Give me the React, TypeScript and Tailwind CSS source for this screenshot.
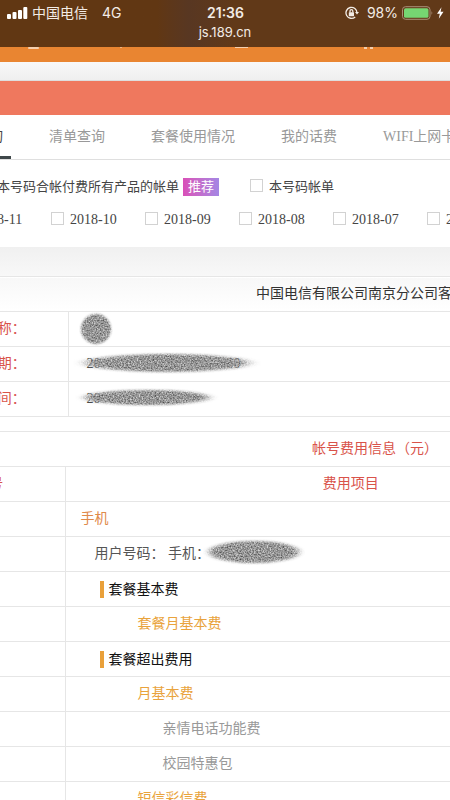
import React from "react";

const CJK = "font-['Liberation_Serif','Noto_Sans_CJK_SC',sans-serif]";

const tabs = ["帐单查询", "清单查询", "套餐使用情况", "我的话费", "WIFI上网卡"];
const months = ["2018-11", "2018-10", "2018-09", "2018-08", "2018-07", "2018-06", "2018-05"];

type BlobProps = { id: string; width: number; height: number; soft: number; className: string };

/* Grainy smudge that hides private values */
function Smudge({ id, width, height, soft, className }: BlobProps) {
  return (
    <svg className={"absolute " + className} width={width} height={height} aria-hidden="true">
      <defs>
        <filter id={id} x="0" y="0" width={width} height={height} filterUnits="userSpaceOnUse" colorInterpolationFilters="sRGB">
          <feGaussianBlur in="SourceGraphic" stdDeviation={`${soft} 1`} result="shape" />
          <feTurbulence type="fractalNoise" baseFrequency="0.7" numOctaves="2" seed="7" />
          <feColorMatrix values="0.8 0 0 0 0.19  0.8 0 0 0 0.19  0.8 0 0 0 0.19  0 0 0 0 1" />
          <feComposite in2="shape" operator="in" />
        </filter>
      </defs>
      <ellipse
        cx={width / 2}
        cy={height / 2}
        rx={width / 2 - soft * 2}
        ry={height / 2 - 2}
        fill="#000"
        filter={`url(#${id})`}
      />
    </svg>
  );
}

function StatusBar() {
  return (
    <header className="relative h-[47px] bg-linear-to-r from-[#613713] from-35% via-[#583722] via-42% to-[#613918] to-52% font-['Inter','Noto_Sans_CJK_SC',sans-serif] text-[#f3ece6]">
      <div className="grid grid-cols-[1fr_auto_1fr] items-center pt-1 pr-1.5 pl-[7px] text-[14px] leading-[18px]">
        <div className="flex items-center">
          <svg width="21" height="12" viewBox="0 0 21 12" fill="#fff" aria-hidden="true">
            <rect x="0" y="7" width="4" height="5" rx="1" />
            <rect x="5.5" y="5" width="4" height="7" rx="1" />
            <rect x="11" y="3" width="4" height="9" rx="1" />
            <rect x="16.3" y="0" width="4" height="12" rx="1" />
          </svg>
          <span className="ml-1">中国电信</span>
          <span className="ml-[14px]">4G</span>
        </div>
        <span className="font-semibold">21:36</span>
        <div className="flex items-center justify-end">
          <svg width="14" height="14" viewBox="0 0 14 14" fill="none" stroke="#f3ece6" strokeWidth="1.3" aria-hidden="true">
            <path d="M12 6.8A5.5 5.5 0 1 0 10.2 10.9" />
            <path d="M10 6h4l-2 2.6z" fill="#f3ece6" stroke="none" />
            <rect x="3.8" y="6.2" width="5.2" height="4" rx="0.5" fill="#f3ece6" stroke="none" />
            <path d="M5 6.4V5a1.4 1.4 0 0 1 2.8 0v1.4" />
          </svg>
          <span className="ml-2">98%</span>
          <svg className="ml-1" width="42" height="14" viewBox="0 0 42 14" aria-hidden="true">
            <rect x="0.5" y="0.7" width="27.5" height="12.6" rx="3" fill="none" stroke="#a98f78" />
            <rect x="2" y="2.2" width="24.5" height="9.6" rx="1.6" fill="#76d672" />
            <path d="M29.5 5q1.8 2 0 4z" fill="#a98f78" />
            <path d="M39.5 1.2 35 7.7h2.8l-1 5 4.7-7h-2.9z" fill="#fff" />
          </svg>
        </div>
      </div>
      <p className="mt-px text-center text-[13px] leading-[18px]">js.189.cn</p>
    </header>
  );
}

function Check({ label, className }: { label: string; className: string }) {
  return (
    <label className={"flex items-center gap-1.5 " + className}>
      <input type="checkbox" className="-mt-[3px] size-[13px] shrink-0 appearance-none border border-[#d2d2d2] bg-white checked:bg-[#999]" />
      <span>{label}</span>
    </label>
  );
}

const line = "border-[#e6e6e6]";

function InfoRow({ label, children }: { label: string; children: React.ReactNode }) {
  return (
    <tr className={"h-[35px] border-y bg-white " + line}>
      <th scope="row" className={"border-r font-normal text-[#d9534a] " + line}>{label}</th>
      <td className="pl-[18px] text-[#444]">
        <span className="relative inline-block">{children}</span>
      </td>
    </tr>
  );
}

function FeeRow({ className, children }: { className: string; children: React.ReactNode }) {
  return (
    <tr className={"h-[35px] border-y " + line}>
      <td className={"border-r " + line} />
      <td className={className}>{children}</td>
      <td />
    </tr>
  );
}

export default function App() {
  return (
    <div className={"h-screen overflow-hidden bg-[#f3f3f3] text-[14px] leading-[20px] " + CJK}>
      <StatusBar />
      <svg className="block h-[15px] w-full bg-[#e98531]" aria-hidden="true">
        <rect x="28" y="0" width="11" height="2" rx="1" fill="#f5cfae" />
        <rect x="120" y="0" width="2" height="1" fill="#f0b480" />
        <rect x="235" y="0" width="13" height="1" fill="#f5cfae" />
        <rect x="364" y="0" width="3" height="2" fill="#f5cfae" />
        <rect x="370" y="0" width="3" height="2" fill="#f5cfae" />
      </svg>
      <div className="h-[19px] border-b border-[#dedede] bg-linear-to-b from-[#f8f8f8] to-[#efefef]" />
      <div className="h-[34px] bg-[#ef785e]" />

      <main className="-ml-[86px] min-w-[922px]">
        <nav className="flex h-[45px] gap-[30px] border-b border-[#dfdfdf] bg-white pl-[25px] text-[#999]">
          {tabs.map((tab, i) => (
            <a
              key={tab}
              href="#"
              className={
                i === 0
                  ? "border-b-3 border-[#3f474a] px-2 pt-3 text-[#444]"
                  : "px-2 pt-3"
              }
            >
              {tab}
            </a>
          ))}
        </nav>

        <form className="h-[87px] bg-white pt-[17px] text-[#444]">
          <div className="flex items-center pl-[64px] text-[13px]">
            <Check className="" label="本号码合帐付费所有产品的帐单" />
            <span className="ml-1 bg-linear-to-r from-[#d94fb8] to-[#a386e4] px-[5px] leading-[18px] text-white">推荐</span>
            <Check className="ml-[31px]" label="本号码帐单" />
          </div>
          <div className="mt-[13px] flex pl-[43px]">
            {months.map((m) => (
              <Check key={m} className="w-[94px]" label={m} />
            ))}
          </div>
        </form>

        <div className="h-[29px] bg-linear-to-b from-[#f0f0f0] to-[#f8f8f8]" />

        <table className="w-[922px] table-fixed border-collapse bg-white">
          <colgroup>
            <col className="w-[154px]" />
            <col />
          </colgroup>
          <thead>
            <tr className={"h-[35px] border-y bg-linear-to-b from-[#f8f8f8] to-white " + line}>
              <th colSpan={2} className="font-normal text-[#333]">中国电信有限公司南京分公司客户帐单</th>
            </tr>
          </thead>
          <tbody>
            <InfoRow label="客户名称：">
              &nbsp;
              <Smudge id="smudge-name" width={34} height={34} soft={1} className="-top-[7px] -left-[8px]" />
            </InfoRow>
            <InfoRow label="计费周期：">
              <span className="inline-block w-[154px] text-justify [text-align-last:justify]">20 00</span>
              <Smudge id="smudge-period" width={188} height={22} soft={7} className="-top-[2px] -left-[14px]" />
            </InfoRow>
            <InfoRow label="打印时间：">
              20
              <Smudge id="smudge-time" width={144} height={19} soft={5} className="-top-px -left-[12px]" />
            </InfoRow>
          </tbody>
        </table>

        <div className="h-[14px] bg-white" />

        <table className="w-[922px] table-fixed border-collapse bg-white">
          <colgroup>
            <col className="w-[151px]" />
            <col />
            <col className="w-[200px]" />
          </colgroup>
          <thead className="text-[#d9534a]">
            <tr className={"h-[35px] border-y " + line}>
              <th colSpan={3} className="font-normal">帐号费用信息（元）</th>
            </tr>
            <tr className={"h-[35px] border-y " + line}>
              <th className={"border-r font-normal " + line}>帐号</th>
              <th className="font-normal">费用项目</th>
              <th className="font-normal">金额</th>
            </tr>
          </thead>
          <tbody>
            <FeeRow className="pl-[15px] text-[#df8a4a]">手机</FeeRow>
            <FeeRow className="pl-[29px] text-[#555]">
              <span className="relative inline-block">
                用户号码： 手机：
                <Smudge id="smudge-phone" width={102} height={26} soft={3} className="-top-[5px] left-[108px]" />
              </span>
            </FeeRow>
            <FeeRow className="pl-[34px] text-[#111]">
              <span className="block border-l-4 border-[#e9a03a] pl-[5px] leading-[17px]">套餐基本费</span>
            </FeeRow>
            <FeeRow className="pl-[72px] text-[#e9a33c]">套餐月基本费</FeeRow>
            <FeeRow className="pl-[34px] text-[#111]">
              <span className="block border-l-4 border-[#e9a03a] pl-[5px] leading-[17px]">套餐超出费用</span>
            </FeeRow>
            <FeeRow className="pl-[72px] text-[#e9a33c]">月基本费</FeeRow>
            <FeeRow className="pl-[97px] text-[#999]">亲情电话功能费</FeeRow>
            <FeeRow className="pl-[97px] text-[#999]">校园特惠包</FeeRow>
            <FeeRow className="pl-[72px] text-[#e9a33c]">短信彩信费</FeeRow>
          </tbody>
        </table>
      </main>
    </div>
  );
}
